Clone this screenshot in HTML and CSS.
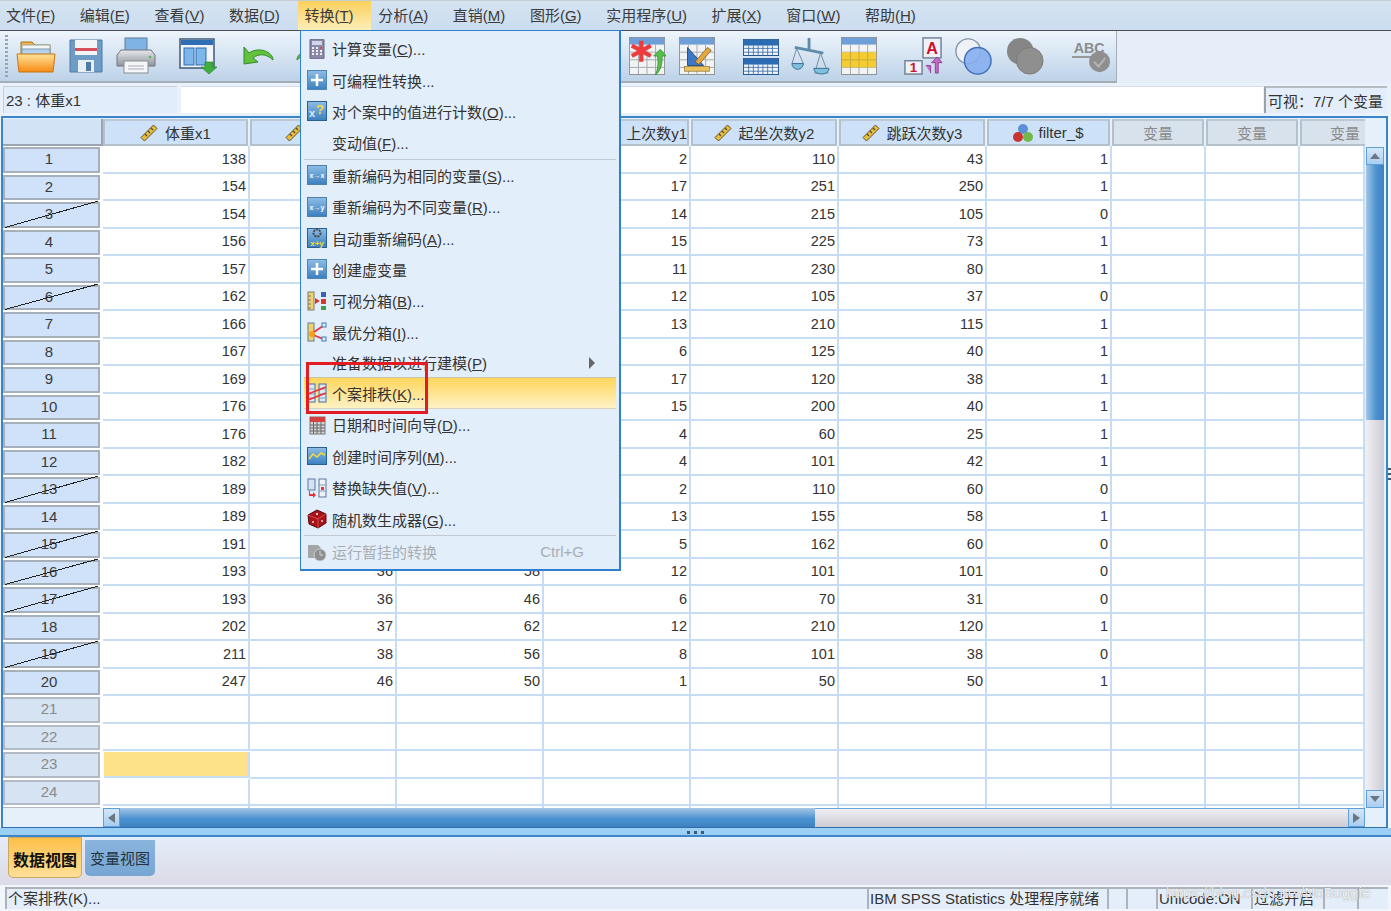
FILE: index.html
```html
<!DOCTYPE html>
<html lang="zh-CN">
<head>
    <meta charset="UTF-8">
    <title>IBM SPSS Statistics 数据编辑器</title>
    <link rel="stylesheet" href="styles.css">
</head>
<body>

<svg class="defs" width="0" height="0">
    <defs>
        <linearGradient id="gBlueBox" x1="0" y1="0" x2="0" y2="1"><stop offset="0" stop-color="#8fbde6"/><stop offset="1" stop-color="#3b7fbf"/></linearGradient>
        <linearGradient id="gOrange" x1="0" y1="0" x2="0" y2="1"><stop offset="0" stop-color="#ffe39a"/><stop offset="1" stop-color="#f58a12"/></linearGradient>
        <linearGradient id="gGray" x1="0" y1="0" x2="0" y2="1"><stop offset="0" stop-color="#e6e8ec"/><stop offset="1" stop-color="#8f959c"/></linearGradient>
        <symbol id="ruler" viewBox="0 0 18 18">
            <path d="M1 13.5 13.5 1 17 4.5 4.500 17Z" fill="#e9bd3a" stroke="#5d5330" stroke-width="1"/>
            <path d="M5 10l2 2M8 7l2 2M11 4l2 2" stroke="#4d4a30" stroke-width="1.200"/>
        </symbol>
        <symbol id="plusbox" viewBox="0 0 20 20">
            <rect x=".5" y=".5" width="19" height="19" fill="url(#gBlueBox)" stroke="#4f86ba"/>
            <path d="M10 4v12M4 10h12" stroke="#fff" stroke-width="2.500"/>
        </symbol>
        <symbol id="minitable" viewBox="0 0 38 40">
            <rect x=".5" y=".5" width="37" height="39" fill="#f2f3f3" stroke="#8b8f93"/>
            <rect x="1" y="1" width="36" height="7" fill="#6f9fd8"/>
            <path d="M1 16h36M1 24h36M1 32h36M10 8v31M19 8v31M28 8v31" stroke="#a3a8ad"/>
        </symbol>
        <symbol id="bluegrid" viewBox="0 0 38 18">
            <rect x=".5" y=".5" width="37" height="17" fill="#eef3f9" stroke="#1d4f8c"/>
            <rect x="1" y="1" width="36" height="6" fill="#2b6cb3"/>
            <path d="M1 10h36M1 14h36M6 7v11M11 7v11M16 7v11M21 7v11M26 7v11M31 7v11" stroke="#2f62a0" stroke-width=".8"/>
        </symbol>
    </defs>
</svg>

<div class="menubar">
    <span class="top-item">文件(<u>F</u>)</span>
    <span class="top-item">编辑(<u>E</u>)</span>
    <span class="top-item">查看(<u>V</u>)</span>
    <span class="top-item">数据(<u>D</u>)</span>
    <span class="top-item active">转换(<u>T</u>)</span>
    <span class="top-item">分析(<u>A</u>)</span>
    <span class="top-item">直销(<u>M</u>)</span>
    <span class="top-item">图形(<u>G</u>)</span>
    <span class="top-item">实用程序(<u>U</u>)</span>
    <span class="top-item">扩展(<u>X</u>)</span>
    <span class="top-item">窗口(<u>W</u>)</span>
    <span class="top-item">帮助(<u>H</u>)</span>
</div>

<div class="toolbar-row">
    <div class="toolbar">
        <svg class="tb" viewBox="0 0 40 36"><path d="M5 4h11l3 3h15v10H5Z" fill="#f5b240" stroke="#a9701c"/><rect x="6" y="7" width="28" height="5" fill="#f4f6f8" stroke="#9aa"/><rect x="6" y="11" width="28" height="6" fill="#b5d2ee" stroke="#7f9cb8"/><path d="M1 16h38l-2 18H3Z" fill="url(#gOrange)" stroke="#c87512"/></svg>
        <svg class="tb" viewBox="0 0 40 36"><path d="M4 2h32v32H4Z" fill="#6d9cc7" stroke="#4e7ba6"/><rect x="9" y="2" width="22" height="15" fill="#f3f4f6"/><rect x="9" y="10" width="22" height="3" fill="#d8505c"/><rect x="12" y="22" width="16" height="12" fill="#e9eef3"/><rect x="20" y="24" width="5" height="9" fill="#4e7ba6"/></svg>
        <svg class="tb" viewBox="0 0 40 36"><rect x="9" y="0" width="22" height="15" fill="#7fb2e5" stroke="#5f7d9c"/><path d="M5 12h30l4 5v11H1V17Z" fill="url(#gGray)" stroke="#6f747a"/><rect x="8" y="23" width="24" height="12" fill="#f5f6f7" stroke="#8a8f95"/><path d="M12 28h16M12 31h16" stroke="#aab"/><circle cx="34" cy="19" r="1.300" fill="#4dbb55"/></svg>
        <svg class="tb" viewBox="0 0 40 36"><rect x="2" y="1" width="34" height="29" fill="#f2f5f8" stroke="#3e5a7c" stroke-width="1.500"/><rect x="3" y="2" width="32" height="5" fill="#2f6db5"/><rect x="6" y="10" width="10" height="17" fill="#7db6e8" stroke="#2f6db5"/><rect x="18" y="10" width="10" height="17" fill="#7db6e8" stroke="#2f6db5"/><path d="M27 24h8v5h4l-8 7-8-7h4Z" fill="#3fae3c" stroke="#267a26" stroke-width=".6"/></svg>
        <svg class="tb" viewBox="0 0 40 36"><path d="M4 9v17l14-2-5-4c6-5 14-4 20 2 0-8-14-14-24-7Z" fill="#63c23c" stroke="#2d8a2a"/></svg>
        <svg class="tb" viewBox="0 0 40 36"><path d="M36 9v17l-14-2 5-4c-6-5-14-4-20 2 0-8 14-14 24-7Z" fill="#63c23c" stroke="#2d8a2a"/></svg>
        <svg class="tb far" viewBox="0 0 38 40"><use href="#minitable" width="38" height="40"/><path d="M13 4v22M3 9l20 11M3 20 23 9" stroke="#ee3b3b" stroke-width="4.500"/><path d="M28 40c3-8 3-14 2-20h-4l7-7 6 7h-4c0 8-1 15-7 20Z" fill="#58c04a" stroke="#2d8a2a" stroke-width=".8"/></svg>
        <svg class="tb" viewBox="0 0 38 40"><use href="#minitable" width="38" height="40"/><path d="M9 11v19h17Z" fill="#3e78c4" stroke="#284f86"/><path d="M17 26 30 11l4 3-13 15Z" fill="#e5a63b" stroke="#6b4d1c" stroke-width=".7"/><rect x="6" y="31" width="26" height="5" fill="#e9c25c" stroke="#8a7130" stroke-width=".7"/></svg>
        <svg class="tb s24" viewBox="0 0 38 40"><use href="#bluegrid" y="2" width="38" height="18"/><use href="#bluegrid" y="22" width="38" height="18"/></svg>
        <svg class="tb s9" viewBox="0 0 40 40"><path d="M19 1v12M4 11l30 6" stroke="#5f8baa" stroke-width="3"/><path d="M6 12 1 28h12Z M31 17l-6 21h14Z" fill="none" stroke="#6d8aa2"/><path d="M1 28a6 6 0 0 0 12 0Z" fill="#7fc0de" stroke="#3a6e91"/><path d="M24 33c0 8 16 8 16 0Z" fill="#7fc0de" stroke="#3a6e91"/></svg>
        <svg class="tb s9" viewBox="0 0 38 40"><use href="#minitable" width="38" height="40"/><rect x="1" y="16" width="36" height="16" fill="#f4cd35"/><path d="M1 24h36M10 16v16M19 16v16M28 16v16" stroke="#c8a93a"/></svg>
        <svg class="tb s24" viewBox="0 0 40 40"><rect x="20" y="1" width="19" height="21" fill="#eef1f6" stroke="#6e7f96" stroke-width="1.500"/><text x="29.500" y="18" class="ic-a">A</text><rect x="1" y="25" width="18" height="14" fill="#eef1f6" stroke="#6e7f96" stroke-width="1.500"/><text x="10" y="37" class="ic-1">1</text><path d="M28 38V30h-5M33 38V27h-4l6-6 5 6h-4v11Z" fill="#c869c8" stroke="#8b3f90"/></svg>
        <svg class="tb s10" viewBox="0 0 40 40"><circle cx="15" cy="15" r="13" fill="#eef2f7" stroke="#8a96a4" stroke-width="1.500"/><circle cx="25" cy="25" r="14" fill="#86aef0" fill-opacity=".9" stroke="#3f70b8" stroke-width="1.500"/></svg>
        <svg class="tb s12" viewBox="0 0 40 40"><circle cx="15" cy="15" r="14" fill="#868686"/><circle cx="25" cy="25" r="14" fill="#8f8f8f" stroke="#7a7a7a"/></svg>
        <svg class="tb s26" viewBox="0 0 42 40"><text x="19" y="17" class="ic-abc">ABC</text><path d="M1 21h34" stroke="#999" stroke-width="2"/><circle cx="30" cy="26" r="11" fill="#8f8f8f"/><path d="M24 26l5 5 7-9" fill="none" stroke="#b5b5b5" stroke-width="2"/></svg>
    </div>
</div>

<div class="editor-row">
    <div class="cell-name">23 : 体重x1</div>
    <div class="cell-value"></div>
    <div class="var-count">可视：7/7 个变量</div>
</div>

<div class="sheet">
    <div class="sheet-left">
        <div class="cols head">
            <div class="corner"></div>
            <div class="hd"><svg class="hd-ic"><use href="#ruler"/></svg>体重x1</div>
            <div class="hd col2"><svg class="hd-ic"><use href="#ruler"/></svg></div>
            <div class="hd"></div>
            <div class="hd clip">上次数y1</div>
            <div class="hd"><svg class="hd-ic"><use href="#ruler"/></svg>起坐次数y2</div>
            <div class="hd"><svg class="hd-ic"><use href="#ruler"/></svg>跳跃次数y3</div>
            <div class="hd"><svg class="hd-ic balls" viewBox="0 0 20 20"><circle cx="10" cy="6" r="5" fill="#5b8fd6"/><circle cx="5" cy="14" r="5" fill="#c8342f"/><circle cx="15" cy="14" r="5" fill="#72b84a"/></svg>filter_$</div>
            <div class="hd empty">变量</div>
            <div class="hd empty">变量</div>
            <div class="hd empty last">变量</div>
        </div>
        <div class="body">
            <div class="cols row"><div class="rh">1</div><div>138</div><div></div><div></div><div>2</div><div>110</div><div>43</div><div>1</div><div></div><div></div><div></div></div>
            <div class="cols row"><div class="rh">2</div><div>154</div><div></div><div></div><div>17</div><div>251</div><div>250</div><div>1</div><div></div><div></div><div></div></div>
            <div class="cols row"><div class="rh off">3</div><div>154</div><div></div><div></div><div>14</div><div>215</div><div>105</div><div>0</div><div></div><div></div><div></div></div>
            <div class="cols row"><div class="rh">4</div><div>156</div><div></div><div></div><div>15</div><div>225</div><div>73</div><div>1</div><div></div><div></div><div></div></div>
            <div class="cols row"><div class="rh">5</div><div>157</div><div></div><div></div><div>11</div><div>230</div><div>80</div><div>1</div><div></div><div></div><div></div></div>
            <div class="cols row"><div class="rh off">6</div><div>162</div><div></div><div></div><div>12</div><div>105</div><div>37</div><div>0</div><div></div><div></div><div></div></div>
            <div class="cols row"><div class="rh">7</div><div>166</div><div></div><div></div><div>13</div><div>210</div><div>115</div><div>1</div><div></div><div></div><div></div></div>
            <div class="cols row"><div class="rh">8</div><div>167</div><div></div><div></div><div>6</div><div>125</div><div>40</div><div>1</div><div></div><div></div><div></div></div>
            <div class="cols row"><div class="rh">9</div><div>169</div><div></div><div></div><div>17</div><div>120</div><div>38</div><div>1</div><div></div><div></div><div></div></div>
            <div class="cols row"><div class="rh">10</div><div>176</div><div></div><div></div><div>15</div><div>200</div><div>40</div><div>1</div><div></div><div></div><div></div></div>
            <div class="cols row"><div class="rh">11</div><div>176</div><div></div><div></div><div>4</div><div>60</div><div>25</div><div>1</div><div></div><div></div><div></div></div>
            <div class="cols row"><div class="rh">12</div><div>182</div><div></div><div></div><div>4</div><div>101</div><div>42</div><div>1</div><div></div><div></div><div></div></div>
            <div class="cols row"><div class="rh off">13</div><div>189</div><div></div><div></div><div>2</div><div>110</div><div>60</div><div>0</div><div></div><div></div><div></div></div>
            <div class="cols row"><div class="rh">14</div><div>189</div><div></div><div></div><div>13</div><div>155</div><div>58</div><div>1</div><div></div><div></div><div></div></div>
            <div class="cols row"><div class="rh off">15</div><div>191</div><div></div><div></div><div>5</div><div>162</div><div>60</div><div>0</div><div></div><div></div><div></div></div>
            <div class="cols row"><div class="rh off">16</div><div>193</div><div>36</div><div>58</div><div>12</div><div>101</div><div>101</div><div>0</div><div></div><div></div><div></div></div>
            <div class="cols row"><div class="rh off">17</div><div>193</div><div>36</div><div>46</div><div>6</div><div>70</div><div>31</div><div>0</div><div></div><div></div><div></div></div>
            <div class="cols row"><div class="rh">18</div><div>202</div><div>37</div><div>62</div><div>12</div><div>210</div><div>120</div><div>1</div><div></div><div></div><div></div></div>
            <div class="cols row"><div class="rh off">19</div><div>211</div><div>38</div><div>56</div><div>8</div><div>101</div><div>38</div><div>0</div><div></div><div></div><div></div></div>
            <div class="cols row"><div class="rh">20</div><div>247</div><div>46</div><div>50</div><div>1</div><div>50</div><div>50</div><div>1</div><div></div><div></div><div></div></div>
            <div class="cols row"><div class="rh blank">21</div><div></div><div></div><div></div><div></div><div></div><div></div><div></div><div></div><div></div><div></div></div>
            <div class="cols row"><div class="rh blank">22</div><div></div><div></div><div></div><div></div><div></div><div></div><div></div><div></div><div></div><div></div></div>
            <div class="cols row"><div class="rh blank">23</div><div class="current"></div><div></div><div></div><div></div><div></div><div></div><div></div><div></div><div></div><div></div></div>
            <div class="cols row"><div class="rh blank">24</div><div></div><div></div><div></div><div></div><div></div><div></div><div></div><div></div><div></div><div></div></div>
            <div class="cols row"><div class="rh blank"></div><div></div><div></div><div></div><div></div><div></div><div></div><div></div><div></div><div></div><div></div></div>
        </div>
        <div class="hscroll">
            <div class="hs-blank"></div>
            <div class="sb-btn"><span class="tri left"></span></div>
            <div class="hs-thumb"></div>
            <div class="hs-track"></div>
            <div class="sb-btn"><span class="tri right"></span></div>
        </div>
    </div>
    <div class="vscroll">
        <div class="sb-btn tall"><span class="tri up"></span></div>
        <div class="vs-thumb"></div>
        <div class="vs-track"></div>
        <div class="sb-btn tall"><span class="tri down"></span></div>
    </div>
    <div class="side-grip"></div>
</div>

<div class="splitter"><span class="split-dots"></span></div>

<div class="tabs">
    <div class="tab on">数据视图</div>
    <div class="tab">变量视图</div>
</div>

<div class="status">
    <div class="st st-main">个案排秩(K)...</div>
    <div class="st st-proc">IBM SPSS Statistics 处理程序就绪</div>
    <div class="st st-a"></div>
    <div class="st st-b"></div>
    <div class="st st-uni">Unicode:ON</div>
    <div class="st st-filter">过滤开启</div>
    <div class="st st-c"></div>
    <div class="st st-d"></div>
</div>

<div class="menu">
    <div class="item"><svg class="ic" viewBox="0 0 20 20"><rect x="3" y="0" width="14" height="20" rx="1" fill="#8c89a8" stroke="#66647e"/><rect x="5" y="2" width="10" height="4" fill="#cfd6ea"/><path d="M5 9h2M9 9h2M13 9h2M5 12h2M9 12h2M13 12h2M5 15h2M9 15h2M13 15h2" stroke="#f0f0f6" stroke-width="2"/><path d="M13 9h2" stroke="#d84f4f" stroke-width="2"/></svg><span>计算变量(<u>C</u>)...</span></div>
    <div class="item"><svg class="ic"><use href="#plusbox"/></svg><span>可编程性转换...</span></div>
    <div class="item"><svg class="ic" viewBox="0 0 20 20"><rect x=".5" y=".5" width="19" height="19" fill="url(#gBlueBox)" stroke="#28609a"/><text x="5" y="16" class="ic-x">x</text><text x="13" y="13" class="ic-q">?</text></svg><span>对个案中的值进行计数(<u>O</u>)...</span></div>
    <div class="item"><span class="ic"></span><span>变动值(<u>F</u>)...</span></div>
    <div class="sep"></div>
    <div class="item"><svg class="ic" viewBox="0 0 20 20"><rect x=".5" y=".5" width="19" height="19" fill="url(#gBlueBox)" stroke="#4f7faf"/><text x="10" y="13" class="ic-rec">x→x</text></svg><span>重新编码为相同的变量(<u>S</u>)...</span></div>
    <div class="item"><svg class="ic" viewBox="0 0 20 20"><rect x=".5" y=".5" width="19" height="19" fill="url(#gBlueBox)" stroke="#4f7faf"/><text x="10" y="13" class="ic-rec">x→y</text></svg><span>重新编码为不同变量(<u>R</u>)...</span></div>
    <div class="item"><svg class="ic" viewBox="0 0 20 20"><rect x=".5" y=".5" width="19" height="19" fill="url(#gBlueBox)" stroke="#28609a"/><circle cx="10" cy="5" r="3.500" fill="none" stroke="#444" stroke-width="2" stroke-dasharray="2 1"/><text x="10" y="18" class="ic-auto">x+y</text></svg><span>自动重新编码(<u>A</u>)...</span></div>
    <div class="item"><svg class="ic"><use href="#plusbox"/></svg><span>创建虚变量</span></div>
    <div class="item"><svg class="ic" viewBox="0 0 20 20"><rect x="1" y="1" width="6" height="18" fill="#f0d266" stroke="#7d7d7d"/><path d="M1 5h3M1 9h3M1 13h3M1 17h3" stroke="#777"/><path d="M8 7l5 3-5 3Z" fill="#d8362f"/><rect x="14" y="1" width="5" height="5" fill="#3a62b8"/><rect x="14" y="8" width="5" height="5" fill="#d8362f"/><rect x="14" y="15" width="5" height="4" fill="#3f9e48"/></svg><span>可视分箱(<u>B</u>)...</span></div>
    <div class="item"><svg class="ic" viewBox="0 0 20 20"><rect x="1" y="1" width="6" height="18" fill="#f0d266" stroke="#5f7d9c"/><path d="M4 12 16 4M4 12l12 5" stroke="#e8333a" stroke-width="1.800"/><circle cx="5" cy="12" r="3" fill="#f7a01e"/><rect x="15" y="1" width="4" height="4" fill="#e3eefb" stroke="#3a7ab8"/><rect x="15" y="15" width="4" height="4" fill="#e3eefb" stroke="#3a7ab8"/></svg><span>最优分箱(<u>I</u>)...</span></div>
    <div class="item short"><span class="ic"></span><span>准备数据以进行建模(<u>P</u>)</span><span class="sub-arrow"></span></div>
    <div class="item hover"><svg class="ic" viewBox="0 0 20 20"><rect x="1" y="1" width="7" height="18" fill="#dfe7f2" stroke="#3f6fa8"/><rect x="12" y="1" width="7" height="18" fill="#dfe7f2" stroke="#3f6fa8"/><path d="M1 6h7M1 11h7M1 15h7M12 6h7M12 11h7M12 15h7" stroke="#7f9cc0"/><path d="M1 11 19 4M1 17 19 10" stroke="#e8333a" stroke-width="1.800"/></svg><span>个案排秩(<u>K</u>)...</span></div>
    <div class="item"><svg class="ic" viewBox="0 0 20 20"><rect x="3" y="2" width="15" height="17" fill="#d5d5d5" stroke="#777"/><rect x="3" y="2" width="15" height="5" fill="#d4403f"/><path d="M3 10h15M3 13h15M3 16h15M6.500 7v12M10 7v12M14 7v12" stroke="#666"/></svg><span>日期和时间向导(<u>D</u>)...</span></div>
    <div class="item"><svg class="ic" viewBox="0 0 20 20"><rect x=".5" y="1.500" width="19" height="17" fill="url(#gBlueBox)" stroke="#28609a"/><path d="M2 13l4-5 4 3 4-4 4 2" fill="none" stroke="#f2dd3c" stroke-width="1.500"/></svg><span>创建时间序列(<u>M</u>)...</span></div>
    <div class="item"><svg class="ic" viewBox="0 0 20 20"><rect x="1" y="1" width="7" height="11" fill="#d6e2f2" stroke="#5a79a0"/><rect x="12" y="1" width="7" height="18" fill="#eef2f8" stroke="#5a79a0"/><path d="M12 7h7M12 13h7" stroke="#7f9cc0"/><path d="M3 13v3h3v-2l3 3-3 3v-2H2v-5Z" fill="#e8333a"/><rect x="14" y="9" width="3" height="3" fill="#e8333a"/></svg><span>替换缺失值(<u>V</u>)...</span></div>
    <div class="item"><svg class="ic" viewBox="0 0 20 20"><path d="M1 6 10 1l9 4v9l-8 5-9-4Z" fill="#a8141c" stroke="#5a0a10"/><path d="M1 6l10 4 8-5M11 10v9" fill="none" stroke="#e05a5a" stroke-width=".8"/><circle cx="10" cy="5" r="1" fill="#fff"/><circle cx="6" cy="13" r="1" fill="#f2c6c6"/><circle cx="15" cy="12" r="1" fill="#f2c6c6"/></svg><span>随机数生成器(<u>G</u>)...</span></div>
    <div class="sep"></div>
    <div class="item disabled"><svg class="ic" viewBox="0 0 20 20"><path d="M1 3h10l3 3v10H1Z" fill="#a3a5a7"/><circle cx="13" cy="13" r="6" fill="#8d8f91" stroke="#c9cbcd"/><path d="M13 9v4h3" fill="none" stroke="#d5d6d8"/></svg><span>运行暂挂的转换</span><span class="shortcut">Ctrl+G</span></div>
</div>

<div class="red-box"></div>
<div class="watermark">https://blog.csdn.net/NoBuggie</div>

</body>
</html>
```

FILE: styles.css
```css
* {
    box-sizing: border-box;
}
body {
    margin: 0;
    width: 1391px;
    height: 911px;
    overflow: hidden;
    position: relative;
    background-color: #f1f6fc;
    font-family: "Liberation Sans", "Noto Sans CJK SC", sans-serif;
    font-size: 15px;
    color: #333;
}
.defs {
    position: absolute;
}

/* menu bar */
.menubar {
    display: flex;
    gap: 1px;
    height: 31px;
    background: linear-gradient(#d5e3f1, #cbddef);
    border-top: 1px solid #c4cdd6;
    border-bottom: 1px solid #4b5058;
}
.top-item {
    display: block;
    line-height: 29px;
    padding: 0 17.6px 0 6px;
    white-space: pre;
    color: #3a3a3a;
}
.top-item.active {
    background: linear-gradient(#fbd05c, #fdeeb8);
}

/* toolbar */
.toolbar-row {
    height: 52px;
    background-color: #e6eff9;
}
.toolbar {
    display: flex;
    align-items: center;
    width: 1117px;
    height: 52px;
    padding-left: 16px;
    background: linear-gradient(#eef5fc, #bdd2e8);
    border-right: 1px solid #a5adb6;
    border-bottom: 2px solid #a5adb6;
    position: relative;
}
.toolbar::before {
    content: "";
    position: absolute;
    left: 5px;
    top: 4px;
    bottom: 4px;
    width: 3px;
    background: repeating-linear-gradient(#9aa4ae 0 2px, transparent 2px 4px);
}
.tb {
    width: 40px;
    height: 38px;
    margin-left: 10px;
    flex: none;
}
.tb:first-child {
    margin-left: 0;
}
.tb.far { margin-left: 297px; }
.tb.s9 { margin-left: 9px; }
.tb.s10 { margin-left: 10px; }
.tb.s12 { margin-left: 12px; }
.tb.s24 { margin-left: 24px; }
.tb.s26 { margin-left: 26px; }
.tb:nth-child(4), .tb:nth-child(5) { margin-left: 22px; }
.ic-a { font: bold 17px "Liberation Sans", sans-serif; fill: #d01030; text-anchor: middle; }
.ic-1 { font: bold 14px "Liberation Sans", sans-serif; fill: #d01030; text-anchor: middle; }
.ic-abc { font: bold 15px "Liberation Sans", sans-serif; fill: #8c8c8c; text-anchor: middle; }

/* cell editor */
.editor-row {
    display: flex;
    height: 33px;
    padding: 3px 0 3px 3px;
    background-color: #e9f1fa;
}
.cell-name {
    width: 174px;
    padding: 2px 0 0 2px;
    background-color: #e1edfa;
    border-top: 1px solid #c5cdd6;
    border-left: 1px solid #c5cdd6;
}
.cell-value {
    flex: 1;
    margin: 0 1px 0 4px;
    background-color: #fff;
    border-top: 1px solid #d5dbe2;
}
.var-count {
    width: 123px;
    margin-right: 4px;
    padding: 2px 0 0 2px;
    white-space: nowrap;
    background-color: #e3eefa;
    border-top: 2px solid #b5bcc4;
    border-left: 2px solid #9aa1a9;
}

/* data sheet */
.sheet {
    display: flex;
    height: 712px;
    margin: 0 3px 0 1px;
    background-color: #e6f0fb;
    border: 2px solid #3a85c8;
    border-bottom: 1px solid #2f6fb0;
    position: relative;
}
.sheet-left {
    display: flex;
    flex-direction: column;
    width: 1362px;
}
.cols {
    display: grid;
    grid-template-columns: 100px 147px 147px 147px 147px 148px 148px 125px 94px 94px 65px;
}
.head {
    height: 28px;
    padding-top: 1px;
    background-color: #e6f0fb;
}
.corner {
    background-color: #d3e3f6;
    border-right: 2px solid #9aa5b1;
    border-bottom: 2px solid #9aa5b1;
}
.hd {
    display: flex;
    align-items: center;
    justify-content: center;
    gap: 7px;
    margin-right: 2px;
    overflow: hidden;
    white-space: nowrap;
    background-color: #cde2f8;
    border: 2px solid #b4c1cd;
    border-top-color: #bcc8d3;
}
.hd.empty {
    background-color: #d8e2ed;
    color: #8a8a8a;
}
.hd.col2 {
    justify-content: flex-start;
    padding-left: 33px;
}
.hd.clip {
    justify-content: flex-end;
    padding-right: 0;
}
.hd.last {
    justify-content: flex-start;
    padding-left: 28px;
    margin-right: 0;
    border-right: 0;
}
.hd-ic {
    width: 18px;
    height: 18px;
    flex: none;
}
.hd-ic.balls {
    width: 20px;
    height: 20px;
    margin-right: -2px;
}
.body {
    flex: 1;
    overflow: hidden;
    background-color: #fff;
    font-size: 14.5px;
}
.row {
    height: 27.5px;
}
.row > div {
    display: flex;
    align-items: center;
    justify-content: flex-end;
    padding-right: 2px;
    border-right: 2px solid #c7ddf3;
    border-bottom: 2px solid #c7ddf3;
}
.row > .rh {
    justify-content: center;
    position: relative;
    padding: 0 5px 2px 0;
    margin: 1px 3px 1px 0;
    background-color: #cfe2f9;
    border: 2px solid #a6b0bb;
    color: #3a3a3a;
    font-size: 15px;
}
.row > .rh.blank {
    color: #8a8a8a;
    background-color: #d5e3f3;
    border-color: #b2bbc5;
}
.rh.off::after {
    content: "";
    position: absolute;
    left: 0;
    right: -2px;
    top: -3px;
    bottom: -2px;
    background: linear-gradient(to bottom right, transparent calc(50% - 1px), #222 calc(50% - 1px), #222 50%, transparent 50%);
}
.row > .current {
    margin: 1px 0 1px 1px;
    background-color: #fee28a;
}

/* scroll bars */
.hscroll {
    display: flex;
    height: 19px;
    flex: none;
    background-color: #e6f0fb;
}
.hs-blank {
    width: 100px;
}
.sb-btn {
    display: flex;
    align-items: center;
    justify-content: center;
    width: 17px;
    flex: none;
    background: linear-gradient(#d5e6f9, #a9ceef);
    border: 1px solid #5fa0dc;
}
.sb-btn.tall {
    width: 18px;
    height: 18px;
}
.hs-thumb {
    width: 695px;
    background: linear-gradient(#a4c7e6, #4d92d0 55%, #3d80c0);
}
.hs-track {
    flex: 1;
    background: linear-gradient(#f0eff3, #cdcbd4);
    border-top: 1px solid #6aa5dc;
}
.tri {
    width: 0;
    height: 0;
    border: 5px solid transparent;
}
.tri.left { border-right: 7px solid #6b7680; border-left: 0; }
.tri.right { border-left: 7px solid #6b7680; border-right: 0; }
.tri.up { border-bottom: 6px solid #6b7680; border-top: 0; }
.tri.down { border-top: 6px solid #6b7680; border-bottom: 0; }
.vscroll {
    display: flex;
    flex-direction: column;
    width: 20px;
    padding: 29px 0 19px 1px;
}
.vs-thumb {
    width: 18px;
    height: 255px;
    background: linear-gradient(to right, #a4c7e6, #4d92d0 55%, #3d80c0);
}
.vs-track {
    flex: 1;
    width: 18px;
    background: linear-gradient(to right, #f0eff3, #cdcbd4);
}
.side-grip {
    position: absolute;
    right: -5px;
    top: 350px;
    width: 3px;
    height: 14px;
    background: repeating-linear-gradient(#3c5a78 0 2px, transparent 2px 5px);
}

/* splitter, tabs */
.splitter {
    display: flex;
    justify-content: center;
    height: 9px;
    background: linear-gradient(#9bd0f4 75%, #3d87c9 75%);
}
.split-dots {
    width: 17px;
    height: 3px;
    margin-top: 3px;
    background: repeating-linear-gradient(to right, #3c5a78 0 3px, transparent 3px 7px);
}
.tabs {
    display: flex;
    gap: 3px;
    height: 48px;
    padding-left: 8px;
    background: linear-gradient(#e3edf9, #dcdae6);
    align-items: flex-start;
}
.tab {
    display: flex;
    align-items: center;
    justify-content: center;
    width: 70px;
    height: 36px;
    margin-top: 3px;
    padding-bottom: 2px;
    border-radius: 0 0 5px 5px;
    background: linear-gradient(#8ab4dd, #76a6d4);
    color: #24333f;
}
.tab.on {
    width: 74px;
    height: 41px;
    margin-top: 0;
    padding-bottom: 0;
    padding-top: 2px;
    background: linear-gradient(#fcc04a, #fedf98);
    border: 1px solid #c9a862;
    font-weight: bold;
    font-size: 16px;
    color: #111;
}

/* status bar */
.status {
    display: flex;
    height: 22px;
    margin-top: 2px;
    padding-left: 5px;
    white-space: nowrap;
}
.st {
    padding: 0 0 0 1px;
    line-height: 20px;
    background-color: #e3eefa;
    border-top: 2px solid #adb3ba;
    border-left: 2px solid #adb3ba;
    overflow: hidden;
}
.st-main { width: 862px; }
.st-proc { width: 240px; }
.st-a { width: 19px; }
.st-b { width: 30px; }
.st-uni { width: 95px; }
.st-filter { width: 72px; }
.st-c { width: 34px; }
.st-d { width: 31px; }

/* dropdown menu */
.menu {
    position: absolute;
    left: 300px;
    top: 30px;
    width: 321px;
    height: 541px;
    padding: 2px 3px 0;
    background-color: #e3eefb;
    border: 1px solid #2f7fd0;
    border-width: 1px 2px 2px 1px;
}
.item {
    display: flex;
    align-items: center;
    gap: 5px;
    height: 31.4px;
    padding-left: 3px;
    white-space: pre;
}
.item.short {
    height: 29.4px;
}
.item.hover {
    height: 32px;
    background: linear-gradient(#fed65c, #fff2c4);
    border-top: 1px solid #c8c4a8;
    border-bottom: 1px solid #d8d4bc;
}
.item.disabled {
    color: #a8adb2;
}
.ic {
    width: 20px;
    height: 20px;
    flex: none;
}
.ic-x { font: bold 11px "Liberation Sans", sans-serif; fill: #dbe8f5; text-anchor: middle; }
.ic-q { font: bold 13px "Liberation Sans", sans-serif; fill: #f6dc3a; text-anchor: middle; }
.ic-rec { font: bold 7px "Liberation Sans", sans-serif; fill: #fff; text-anchor: middle; }
.ic-auto { font: bold 8px "Liberation Sans", sans-serif; fill: #f6dc3a; text-anchor: middle; }
.sep {
    height: 1px;
    background-color: #c4cad1;
}
.sub-arrow {
    margin-left: auto;
    margin-right: 21px;
    border: 6px solid transparent;
    border-left: 6px solid #666;
    border-right: 0;
}
.shortcut {
    margin-left: auto;
    margin-right: 32px;
}

/* annotation over the screenshot */
.red-box {
    position: absolute;
    left: 306px;
    top: 362px;
    width: 122px;
    height: 52px;
    border: 3px solid #e31c23;
}
.watermark {
    position: absolute;
    left: 1166px;
    top: 884px;
    font-size: 15px;
    color: rgba(255, 255, 255, 0.85);
    text-shadow: 0 0 1px rgba(90, 90, 90, 0.7);
}
```
